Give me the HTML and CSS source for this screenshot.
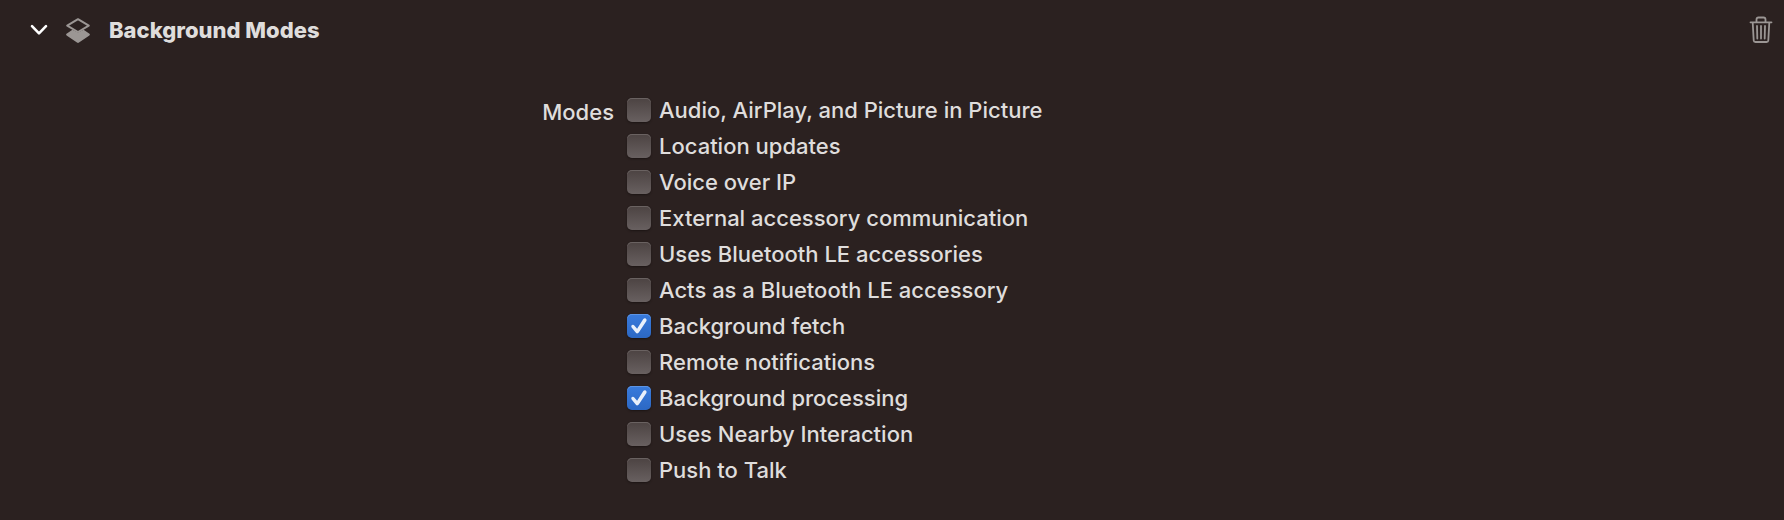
FILE: index.html
```html
<!DOCTYPE html>
<html lang="en">
<head>
<meta charset="utf-8">
<title>Background Modes</title>
<link rel="stylesheet" href="styles.css">
</head>
<body>
<section class="capability">
  <header class="capability-header">
    <button class="icon-button disclosure" type="button" aria-label="Collapse Background Modes" aria-expanded="true">
      <svg width="18" height="12" viewBox="0 0 18 12" fill="none" stroke="#fff" stroke-width="2.6" stroke-linecap="round" stroke-linejoin="round"><path d="M2 2.2 9 9.4l7-7.2"/></svg>
    </button>
    <svg class="layers" width="26" height="28" viewBox="0 0 26 28" aria-hidden="true"><path d="M13 3.2 23.8 9.6 13 16 2.2 9.6Z" fill="none" stroke="#9b9694" stroke-width="2" stroke-linejoin="round"/><path d="M7.4 13.8 1.5 17.7q-1 .9.1 1.7L12 26.6q1 .7 2 0L24.4 19.4q1.1-.8.1-1.7L18.6 13.8 13 16.4Z" fill="#9b9694"/></svg>
    <h1 class="title">Background Modes</h1>
    <button class="icon-button remove" type="button" aria-label="Remove capability">
      <svg width="24" height="28" viewBox="0 0 24 28" fill="none" stroke="#9b9694" stroke-width="1.8" stroke-linecap="round" stroke-linejoin="round"><path d="M1.5 6.3h21M7.5 6V3.5Q7.5 1.5 9.5 1.5h5q2 0 2 2V6M3.7 6.5l1 18q.1 1.5 1.7 1.5h11.2q1.6 0 1.7-1.5l1-18M8 10l.3 12.5M12 10v12.5M16 10l-.3 12.5"/></svg>
    </button>
  </header>
  <div class="form" role="group" aria-labelledby="modes-label">
    <div class="form-label" id="modes-label">Modes</div>
    <div class="modes">
      <label class="mode"><input class="check" type="checkbox">Audio, AirPlay, and Picture in Picture</label>
      <label class="mode"><input class="check" type="checkbox">Location updates</label>
      <label class="mode"><input class="check" type="checkbox">Voice over IP</label>
      <label class="mode"><input class="check" type="checkbox">External accessory communication</label>
      <label class="mode"><input class="check" type="checkbox">Uses Bluetooth LE accessories</label>
      <label class="mode"><input class="check" type="checkbox">Acts as a Bluetooth LE accessory</label>
      <label class="mode"><input class="check" type="checkbox" checked>Background fetch</label>
      <label class="mode"><input class="check" type="checkbox">Remote notifications</label>
      <label class="mode"><input class="check" type="checkbox" checked>Background processing</label>
      <label class="mode"><input class="check" type="checkbox">Uses Nearby Interaction</label>
      <label class="mode"><input class="check" type="checkbox">Push to Talk</label>
    </div>
  </div>
</section>
</body>
</html>
```
FILE: styles.css
```css
body {
  margin: 0;
  background: #2b2120;
  color: #dfdddc;
  font: 450 22px/28px Inter, "Liberation Sans", sans-serif;
}
.capability-header {
  display: flex;
  align-items: center;
  height: 60px;
  padding: 0 11px 0 30px;
}
.icon-button {
  display: flex;
  padding: 0;
  border: 0;
  background: none;
}
.layers {
  margin: 0 18px 0 17px;
}
.title {
  flex: 1;
  margin: 0;
  font-size: 22px;
  line-height: 28px;
  font-weight: 800;
}
.form {
  display: grid;
  grid-template-columns: 35% 1fr;
  padding: 32px 0 32px 4px;
}
.form-label {
  padding: 6px 13px 0 0;
  text-align: right;
}
.modes {
  display: flex;
  flex-direction: column;
  align-items: flex-start;
}
.mode {
  display: flex;
  align-items: center;
  gap: 8px;
  height: 36px;
}
.check {
  appearance: none;
  display: grid;
  place-items: center;
  width: 24px;
  height: 24px;
  margin: 0;
  border-radius: 5px;
  background: linear-gradient(#4c4342, #686060);
  box-shadow: inset 0 1px #6a6261, 0 1px 2px #1c1514;
}
.check:checked {
  background: linear-gradient(#397bdc, #2c68c4);
  box-shadow: inset 0 1px #5c94e4, 0 1px 2px #1c1514;
}
.check:checked::before {
  content: "";
  width: 16px;
  height: 16px;
  background: #e9f0fa;
  clip-path: path("M.6 9.4Q-.4 8 1 7 2.3 6.3 3.3 7.4L6.1 10.7 12.3 1.1Q13.4-.3 14.8.5 16.2 1.5 15.4 3L7.8 14.6Q6.2 16.3 4.7 14.5Z");
}
```
